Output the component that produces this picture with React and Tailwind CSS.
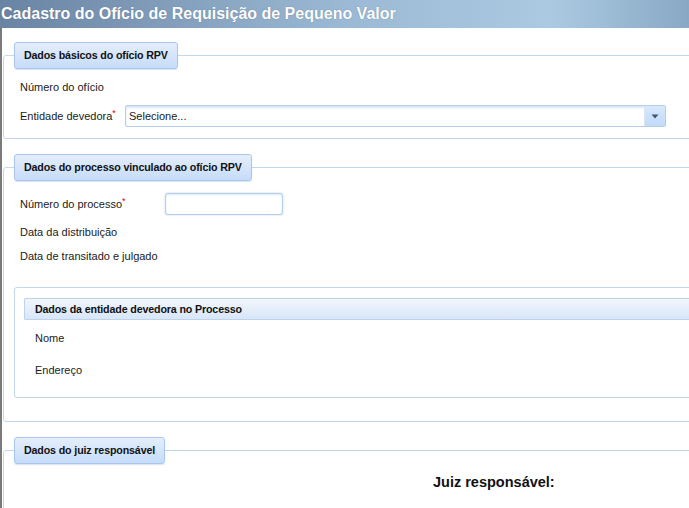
import React from "react";

const font = { fontFamily: '"Liberation Sans", Arial, sans-serif' };

function Req() {
  return <span className="text-[#e00000] text-[9px] align-top relative top-[-1px]">*</span>;
}

function Legend({ children }) {
  return (
    <legend className="h-[27px] px-[9px] border border-[#a9c7ee] rounded-[3px] bg-gradient-to-b from-[#e4eefc] to-[#c6dcfa] text-[10.7px] tracking-[-0.15px] font-bold text-[#111] leading-[25px] shadow-[0_1px_1px_rgba(150,180,220,0.35)]">
      {children}
    </legend>
  );
}

export default function App() {
  return (
    <div className="w-[689px] h-[508px] overflow-hidden bg-white text-[#1a1a1a]" style={font}>
      <div className="h-[28px] bg-[linear-gradient(to_right,#6a84a3_0%,#9bb9d4_50%,#abcae1_80%,#88a8c5_100%)] flex items-center pl-px">
        <h1 className="text-white font-bold text-[16px] leading-none [text-shadow:0_0_1px_rgba(60,80,110,0.6)]">
          Cadastro do Ofício de Requisição de Pequeno Valor
        </h1>
      </div>
      <div className="border-l-2 border-[#7a7a7a] pl-px w-[760px] h-[480px] flex flex-col">
        {/* Fieldset 1 */}
        <fieldset className="mt-[14px] border border-[#c2d6ee] rounded-[3px] px-[10px] pt-[11px] pb-[11px] flex flex-col">
          <Legend>Dados básicos do ofício RPV</Legend>
          <div className="h-[14px] flex items-center pl-[6px] text-[11px]">Número do ofício</div>
          <div className="mt-[11px] h-[22px] flex items-center pl-[6px] text-[11px]">
            <div className="w-[105px]">
              Entidade devedora<Req />
            </div>
            <div className="w-[541px] h-[22px] flex border border-[#b3cdee] rounded-[2px] shadow-[inset_0_2px_2px_rgba(170,200,240,0.45)] bg-white">
              <div className="flex-1 flex items-center pl-[3px] text-[11px]">Selecione...</div>
              <div className="w-[21px] h-full border-l border-[#d6e5f8] bg-gradient-to-b from-[#d8e8fc] to-[#c3dafa] flex items-center justify-center">
                <svg width="8" height="5" viewBox="0 0 8 5">
                  <path d="M0.5 0.5 H7.5 L4 4.5 Z" fill="#3c5874" />
                </svg>
              </div>
            </div>
          </div>
        </fieldset>

        {/* Fieldset 2 */}
        <fieldset className="mt-[15px] border border-[#c2d6ee] rounded-[3px] px-[10px] pt-[12px] pb-[23px] flex flex-col">
          <Legend>Dados do processo vinculado ao ofício RPV</Legend>
          <div className="h-[22px] flex items-center pl-[6px] text-[11px]">
            <div className="w-[145px]">
              Número do processo<Req />
            </div>
            <div className="w-[118px] h-[22px] border border-[#b4cff2] rounded-[3px] bg-white shadow-[0_0_2px_rgba(150,190,240,0.7),inset_0_1px_2px_rgba(170,200,240,0.4)]" />
          </div>
          <div className="mt-[10px] h-[14px] flex items-center pl-[6px] text-[11px]">Data da distribuição</div>
          <div className="mt-[10px] h-[14px] flex items-center pl-[6px] text-[11px]">Data de transitado e julgado</div>

          <div className="mt-[24px] border border-[#c2d6ee] rounded-[3px] pl-[9px] pt-[10px] pb-[20px] flex flex-col">
            <div className="h-[22px] border-y border-l border-[#bcd3ef] rounded-l-[2px] bg-gradient-to-b from-[#f1f6fd] to-[#d8e6f8] flex items-center pl-[10px] text-[10.7px] tracking-[-0.15px] font-bold text-[#111]">
              Dados da entidade devedora no Processo
            </div>
            <div className="mt-[11px] h-[14px] flex items-center pl-[11px] text-[11px]">Nome</div>
            <div className="mt-[18px] h-[14px] flex items-center pl-[11px] text-[11px]">Endereço</div>
          </div>
        </fieldset>

        {/* Fieldset 3 */}
        <fieldset className="mt-[15px] border border-[#c2d6ee] rounded-[3px] px-[10px] pt-[11px] pb-[40px] flex flex-col">
          <Legend>Dados do juiz responsável</Legend>
          <div className="h-[16px] flex items-center pl-[419px] text-[14.5px] font-bold text-[#111]">Juiz responsável:</div>
        </fieldset>
      </div>
    </div>
  );
}
